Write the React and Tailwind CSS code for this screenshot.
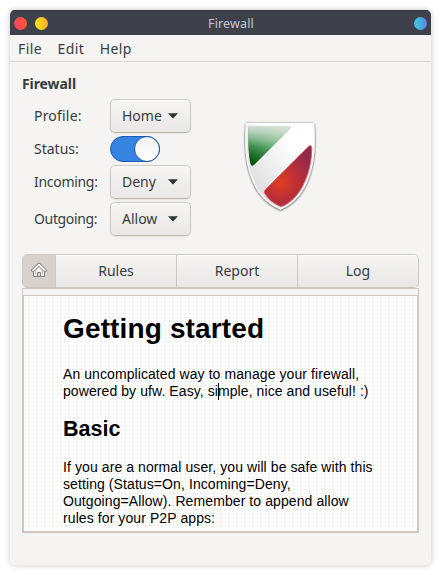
import React from "react";

const UI = "font-['Noto_Sans',sans-serif]";

function Caret() {
  return (
    <svg width="10" height="6" viewBox="0 0 10 6" className="shrink-0">
      <path d="M0 0.3H10L5.6 4.9Q5 5.5 4.4 4.9Z" fill="#2e3436" />
    </svg>
  );
}

function Select({ value }) {
  return (
    <button className="flex h-[34px] w-[81px] items-center justify-between rounded-[5px] border border-[#cdc7c2] border-b-[#bfb8b1] bg-linear-to-b from-[#f6f5f3] to-[#e9e8e6] pl-[11px] pr-[12px] shadow-[inset_0_1px_#fff,0_1px_2px_rgba(0,0,0,0.07)]">
      <span className="text-[14px] leading-5">{value}</span>
      <Caret />
    </button>
  );
}

function Switch() {
  return (
    <div className="flex h-[26px] w-[50px] justify-end rounded-full border border-[#1b5bb0] bg-[#3584e4]">
      <div className="-my-px -mr-px size-[26px] rounded-full border border-[#1b5bb0] bg-linear-to-b from-[#f3f2f1] to-white" />
    </div>
  );
}

function Row({ label, track, h, children }) {
  return (
    <div className={`flex items-center ${h}`}>
      <span className={`w-[76px] text-[14px] leading-5 ${track}`}>{label}</span>
      {children}
    </div>
  );
}

function Shield() {
  return (
    <svg width="80" height="98" viewBox="240 116 80 98">
      <defs>
        <linearGradient id="green" x1="0.8" y1="0" x2="0.1" y2="0.9">
          <stop offset="0" stopColor="#a9d0ae" />
          <stop offset="0.5" stopColor="#4fa262" />
          <stop offset="1" stopColor="#04560f" />
        </linearGradient>
        <linearGradient id="gloss" x1="0" y1="0" x2="0" y2="1">
          <stop offset="0" stopColor="#dde4dd" stopOpacity="0.9" />
          <stop offset="0.5" stopColor="#dde4dd" stopOpacity="0.15" />
          <stop offset="1" stopColor="#04560f" stopOpacity="0" />
        </linearGradient>
        <radialGradient id="red" gradientUnits="userSpaceOnUse" cx="281" cy="182" r="36">
          <stop offset="0" stopColor="#e03c22" />
          <stop offset="0.45" stopColor="#bd3036" />
          <stop offset="1" stopColor="#902850" />
        </radialGradient>
        <linearGradient id="body" x1="0.8" y1="0.1" x2="0.1" y2="0.8">
          <stop offset="0.2" stopColor="#ffffff" />
          <stop offset="1" stopColor="#dcdcdc" />
        </linearGradient>
        <filter id="shade" x="-20%" y="-20%" width="140%" height="140%">
          <feDropShadow dx="0" dy="0.6" stdDeviation="1.2" floodColor="#000" floodOpacity="0.9" />
        </filter>
      </defs>
      <path d="M246.500 123.500H313.500C315 143 314.500 162 308 178C303 192 294 203 280.500 209C267 203 257 192 252 178C245.500 162 245 143 246.500 123.500Z" fill="url(#body)" stroke="#fff" strokeWidth="1.2" filter="url(#shade)" />
      <path d="M250 126H288.500Q292.500 126 290 129L254.500 164.500Q251 167.500 250.200 163Q247.500 148 248.200 128Q248.300 126 250 126Z" fill="url(#green)" />
      <path d="M250 126H288.500Q292.500 126 290 129L254.500 164.500Q251 167.500 250.200 163Q247.500 148 248.200 128Q248.300 126 250 126Z" fill="url(#gloss)" />
      <path d="M308 147Q311.800 143.500 311.800 149C311.500 160 309.500 171 305 181C300 193 292 202 283 206Q281 206.800 279 205.800C273 203 268 199 264.800 193.500Q263.500 191.500 265.500 189.500Z" fill="url(#red)" stroke="#ea5650" strokeWidth="0.9" />
    </svg>
  );
}

function HomeIcon() {
  return (
    <svg width="16" height="16" viewBox="0 0 16 16" fill="none" strokeLinejoin="round" strokeLinecap="round">
      <path d="M2.500 8.500V14.500H13.500V8.500L8 4Z" fill="#f4f3f1" stroke="#85817d" />
      <path d="M6.500 14V10.500H9.500V14" fill="#d6d1cd" stroke="#85817d" />
      <path d="M4.500 9V12.500M11.500 9V12.500" stroke="#b5b0ac" strokeWidth="0.8" />
      <path d="M1.800 8.400L8 2.600L14.200 8.400" stroke="#85817d" strokeWidth="3.400" />
      <path d="M1.900 8.300L8 2.700L14.100 8.300" stroke="#fff" strokeWidth="1.700" />
    </svg>
  );
}

const tab =
  "flex h-full items-center justify-center border-l border-[#cdc7c2] bg-linear-to-b from-[#f6f5f3] to-[#e8e7e5] pb-0.5 shadow-[inset_0_1px_#fff]";

export default function App() {
  return (
    <div className="h-[575px] w-[441px] overflow-hidden bg-white p-[10px]">
      <div className={`flex h-[555px] w-[421px] flex-col overflow-hidden rounded-[5px] bg-[#f5f4f2] text-[#363c3e] shadow-[0_0_6px_rgba(0,0,0,0.22)] ${UI}`}>
        <header className="flex h-[25px] shrink-0 items-center bg-[#3e404c] pl-1 pr-1 pt-0.5 shadow-[inset_0_1px_#30323c]">
          <div className="flex w-[60px] gap-2">
            <i className="size-[13px] rounded-full bg-linear-to-r from-[#ff4060] to-[#ff5a28]" />
            <i className="size-[13px] rounded-full bg-linear-to-r from-[#f8e80c] to-[#ffa52c]" />
          </div>
          <div className="flex-1 text-center text-[12.5px] leading-5 tracking-[0.15px] text-[#c3c6d1]">Firewall</div>
          <div className="flex w-[39px] justify-end">
            <i className="size-[13px] rounded-full bg-linear-to-r from-[#2fd0d8] to-[#5a80ec]" />
          </div>
        </header>
        <nav className="flex h-[27px] shrink-0 items-center gap-[15.5px] border-b border-[#d8d6d4] pl-2 text-[14px] tracking-[0.4px]">
          <span>File</span>
          <span>Edit</span>
          <span>Help</span>
        </nav>
        <main className="flex flex-1 flex-col px-3">
          <h1 className="mt-3 text-[14px] font-bold leading-5 tracking-[-0.08px]">Firewall</h1>
          <div className="mt-[5px] flex">
            <div className="flex w-[181px] flex-col gap-[3px] pl-3">
              <Row label="Profile:" h="h-[34px]" track="tracking-[0.2px]"><Select value="Home" /></Row>
              <Row label="Status:" h="h-[26px]" track="tracking-normal"><Switch /></Row>
              <Row label="Incoming:" h="h-[34px]" track="tracking-[-0.3px]"><Select value="Deny" /></Row>
              <Row label="Outgoing:" h="h-[34px]" track="tracking-[-0.35px]"><Select value="Allow" /></Row>
            </div>
            <div className="ml-[37px] mt-[17px]"><Shield /></div>
          </div>
          <div className="mt-[18px] flex h-[34px] w-[397px] shrink-0 overflow-hidden rounded-[5px] border border-[#cdc7c2] text-[14px]">
            <div className="flex w-8 items-center justify-center bg-[#d6d1cd] pb-0.5"><HomeIcon /></div>
            <div className={`w-[121px] ${tab}`}>Rules</div>
            <div className={`w-[121px] ${tab}`}>Report</div>
            <div className={`flex-1 ${tab}`}>Log</div>
          </div>
          <section className="h-[245px] w-[397px] shrink-0 border border-[#cdc7c2] pt-[6px]">
            <article className="h-[237px] overflow-hidden border border-[#cdc7c2] bg-white bg-[radial-gradient(circle_at_1.5px_1.5px,#dedede_0.6px,transparent_0.9px)] bg-size-[4px_4px] pl-[39px] font-['Liberation_Sans',Arial,sans-serif] text-black">
              <h2 className="mt-[16px] text-[28px] font-bold leading-[34px] tracking-[0.14px]">Getting started</h2>
              <p className="mt-[20px] whitespace-nowrap text-[14px] leading-[17px] tracking-[0.08px]">
                An uncomplicated way to manage your firewall,<br />
                powered by ufw. Easy, si<span className="relative"><i className="absolute left-0 top-0 h-[17px] w-px bg-black" /></span>mple, nice and useful! :)
              </p>
              <h3 className="mt-[16px] text-[21.5px] font-bold leading-[26px]">Basic</h3>
              <p className="mt-[17px] whitespace-nowrap text-[14px] leading-[17px] tracking-[0.09px]">
                If you are a normal user, you will be safe with this<br />
                setting (Status=On, Incoming=Deny,<br />
                Outgoing=Allow). Remember to append allow<br />
                rules for your P2P apps:
              </p>
            </article>
          </section>
        </main>
      </div>
    </div>
  );
}
